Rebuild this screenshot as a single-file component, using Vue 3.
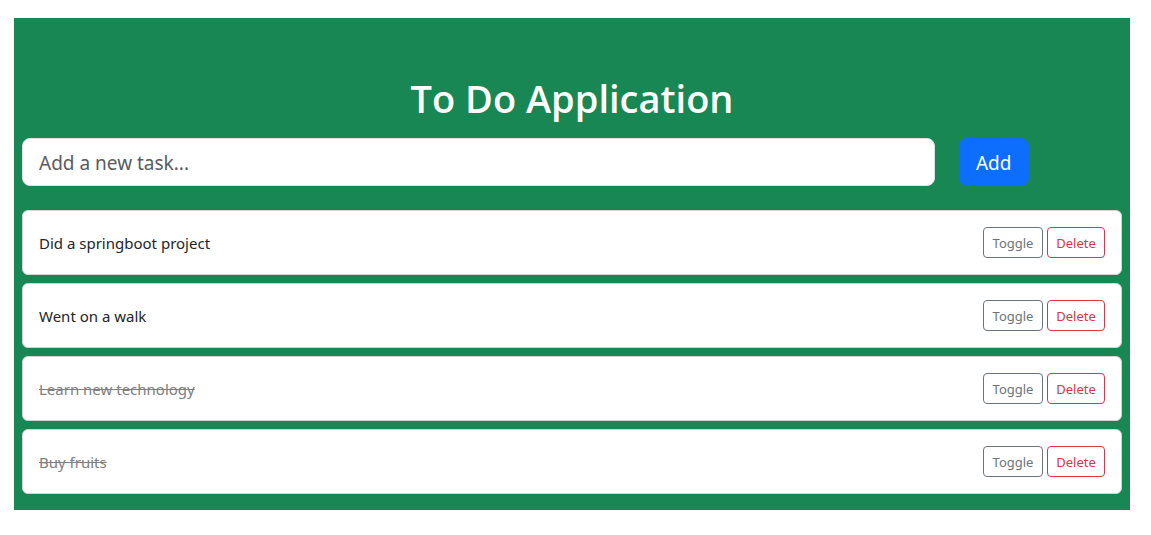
<script setup>
import { ref } from 'vue'

const draft = ref('')
const tasks = ref([
  { id: 1, title: 'Did a springboot project', done: false },
  { id: 2, title: 'Went on a walk', done: false },
  { id: 3, title: 'Learn new technology', done: true },
  { id: 4, title: 'Buy fruits', done: true },
])
let nextId = 5

function addTask() {
  const title = draft.value.trim()
  if (!title) return
  tasks.value.push({ id: nextId++, title, done: false })
  draft.value = ''
}

function removeTask(id) {
  tasks.value = tasks.value.filter((task) => task.id !== id)
}
</script>

<template>
  <main class="panel">
    <h1 class="title">To Do Application</h1>
    <form class="entry" @submit.prevent="addTask">
      <div class="entry-field">
        <input v-model="draft" class="entry-input" type="text" placeholder="Add a new task..." aria-label="New task" />
      </div>
      <div class="entry-action">
        <button class="add" type="submit">Add</button>
      </div>
    </form>
    <ul class="tasks">
      <li v-for="task in tasks" :key="task.id" class="task">
        <span class="task-title" :class="{ done: task.done }">{{ task.title }}</span>
        <div class="actions">
          <button class="small toggle" type="button" @click="task.done = !task.done">Toggle</button>
          <button class="small delete" type="button" @click="removeTask(task.id)">Delete</button>
        </div>
      </li>
    </ul>
  </main>
</template>

<style>
body {
  margin: 0;
  background: #fff;
}
</style>

<style scoped>
.panel,
.panel * {
  box-sizing: border-box;
}
.panel {
  margin: 18px 21px 24px 14px;
  padding: 56px 8px 16px;
  background: #198754;
  color: #212529;
  font-family: "Segoe UI", "Noto Sans", "Open Sans", sans-serif;
  font-size: 15px;
  line-height: 24px;
}
.title {
  margin: 0 0 16px;
  color: #fff;
  font-family: "Segoe UI", "Open Sans", "Noto Sans", sans-serif;
  font-size: 38px;
  font-weight: 600;
  line-height: 48px;
  text-align: center;
}
.entry {
  display: grid;
  grid-template-columns: repeat(12, minmax(0, 1fr));
  column-gap: 24px;
}
.entry-field {
  grid-column: span 10;
}
.entry-action {
  grid-column: span 2;
}
.entry-input {
  display: block;
  width: 100%;
  height: 48px;
  padding: 10px 16px 8px;
  border: 1px solid #dee2e6;
  border-radius: 8px;
  background: #fff;
  color: #212529;
  font: inherit;
  font-size: 19px;
}
.entry-input::placeholder {
  color: #595c5f;
  opacity: 1;
}
.add {
  min-width: 70px;
  height: 48px;
  padding: 2px 16px 0;
  border: 1px solid #0d6efd;
  border-radius: 8px;
  background: #0d6efd;
  color: #fff;
  font: inherit;
  font-size: 19px;
}
.tasks {
  display: grid;
  gap: 8px;
  margin: 24px 0 0;
  padding: 0;
  list-style: none;
}
.task {
  display: flex;
  align-items: center;
  justify-content: space-between;
  padding: 16px;
  border: 1px solid #d1d3d4;
  border-radius: 6px;
  background: #fff;
}
.task-title {
  color: #212529;
}
.task-title.done {
  color: #808080;
  text-decoration: line-through;
}
.actions {
  display: flex;
  gap: 4px;
}
.small {
  height: 31px;
  padding: 0 8px;
  border: 1px solid;
  border-radius: 4px;
  background: transparent;
  font: inherit;
  font-size: 13px;
}
.toggle {
  min-width: 60px;
  border-color: #6c757d;
  color: #6c757d;
}
.delete {
  min-width: 58px;
  border-color: #dc3545;
  color: #dc3545;
}
</style>
